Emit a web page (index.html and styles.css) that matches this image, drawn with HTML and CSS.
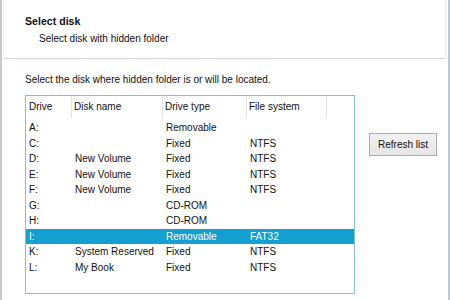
FILE: index.html
```html
<!DOCTYPE html>
<html>
<head>
<meta charset="utf-8">
<link rel="stylesheet" href="styles.css">
</head>
<body>
<div class="window">
  <div class="header">
    <div class="title">Select disk</div>
    <div class="subtitle">Select disk with hidden folder</div>
  </div>
  <div class="body">
    <div class="intro">Select the disk where hidden folder is or will be located.</div>
    <div class="main">
      <div class="list">
        <div class="row head">
          <div class="cell">Drive</div>
          <div class="cell">Disk name</div>
          <div class="cell">Drive type</div>
          <div class="cell">File system</div>
          <div class="cell"></div>
        </div>
        <div class="row"><div class="cell">A:</div><div class="cell"></div><div class="cell">Removable</div><div class="cell"></div></div>
        <div class="row"><div class="cell">C:</div><div class="cell"></div><div class="cell">Fixed</div><div class="cell">NTFS</div></div>
        <div class="row"><div class="cell">D:</div><div class="cell">New Volume</div><div class="cell">Fixed</div><div class="cell">NTFS</div></div>
        <div class="row"><div class="cell">E:</div><div class="cell">New Volume</div><div class="cell">Fixed</div><div class="cell">NTFS</div></div>
        <div class="row"><div class="cell">F:</div><div class="cell">New Volume</div><div class="cell">Fixed</div><div class="cell">NTFS</div></div>
        <div class="row"><div class="cell">G:</div><div class="cell"></div><div class="cell">CD-ROM</div><div class="cell"></div></div>
        <div class="row"><div class="cell">H:</div><div class="cell"></div><div class="cell">CD-ROM</div><div class="cell"></div></div>
        <div class="row selected"><div class="cell">I:</div><div class="cell"></div><div class="cell">Removable</div><div class="cell">FAT32</div></div>
        <div class="row"><div class="cell">K:</div><div class="cell">System Reserved</div><div class="cell">Fixed</div><div class="cell">NTFS</div></div>
        <div class="row"><div class="cell">L:</div><div class="cell">My Book</div><div class="cell">Fixed</div><div class="cell">NTFS</div></div>
      </div>
      <button class="btn">Refresh list</button>
    </div>
  </div>
</div>
</body>
</html>
```
FILE: styles.css
```css
html, body {
  margin: 0;
  padding: 0;
  background: #ffffff;
}
body {
  width: 450px;
  height: 300px;
  overflow: hidden;
  font-family: "Liberation Sans", Arial, sans-serif;
  font-size: 10px;
  color: #111;
}
.window {
  box-sizing: border-box;
  width: 450px;
  height: 300px;
  border-left: 2px solid #c9c9c9;
  border-right: 2px solid #b9cadb;
  background: #fff;
}
.header {
  box-sizing: border-box;
  height: 59px;
  margin: 0 2px 0 1px;
  border-left: 1px solid #f0f0f0;
  border-right: 1px solid #ececec;
  border-bottom: 1px solid #d6d6d6;
  padding: 14px 0 0 21px;
}
.title {
  font-weight: bold;
  font-size: 10.6px;
  line-height: 14px;
}
.subtitle {
  margin: 4px 0 0 14px;
  line-height: 14px;
}
.body {
  padding: 14px 0 0 23px;
}
.intro {
  line-height: 14px;
}
.main {
  display: flex;
  align-items: flex-start;
  margin-top: 8px;
}
.list {
  box-sizing: border-box;
  width: 330px;
  height: 199px;
  border: 1px solid #84c0d3;
  background: #fff;
}
.row {
  display: grid;
  grid-template-columns: 46px 91px 84px 80px;
  height: 15.5px;
  line-height: 15.5px;
}
.row.head {
  grid-template-columns: 46px 91px 84px 80px 1fr;
  height: 24px;
  line-height: 22px;
}
.cell {
  padding-left: 3px;
  white-space: nowrap;
  overflow: hidden;
}
.head .cell {
  border-right: 1px solid #e3e3e3;
  margin-bottom: 2px;
}
.head .cell:first-child {
  padding-left: 3px;
}
.head .cell + .cell {
  padding-left: 2px;
}
.head .cell:last-child {
  border-right: none;
}
.row.selected {
  background: #14a0d0;
  color: #fff;
}
.btn {
  margin: 38px 0 0 14px;
  width: 68px;
  height: 23px;
  padding: 0;
  font-family: "Liberation Sans", Arial, sans-serif;
  font-size: 10px;
  color: #111;
  border: 1px solid #adadad;
  border-radius: 0;
  background: linear-gradient(#f2f2f2, #e6e6e6);
}
```
